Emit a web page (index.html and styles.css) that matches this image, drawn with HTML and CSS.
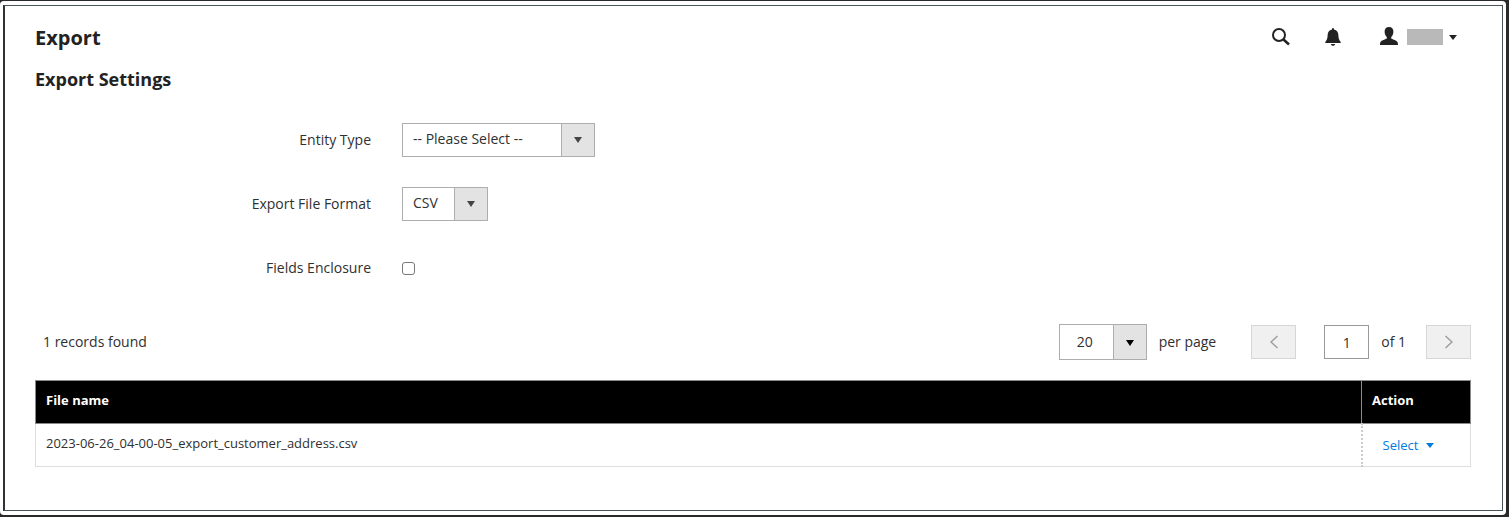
FILE: index.html
```html
<!DOCTYPE html>
<html lang="en">
<head>
<meta charset="utf-8">
<meta name="viewport" content="width=device-width, initial-scale=1">
<title>Export</title>
<link rel="stylesheet" href="styles.css">
</head>
<body>
<div class="frame">
<main class="panel">
  <header class="header">
    <h1 class="title">Export</h1>
    <div class="tools">
      <button class="tool" type="button" aria-label="Search">
        <svg width="20" height="20" viewBox="0 0 20 20"><circle cx="8" cy="8" r="6" fill="none" stroke="currentColor" stroke-width="2"/><path d="M12.5 12.5 18 17.500" stroke="currentColor" stroke-width="2.500"/></svg>
      </button>
      <button class="tool tool-bell" type="button" aria-label="Notifications">
        <svg width="16" height="20" viewBox="0 0 16 20"><path fill="currentColor" d="M7 2.500C7 .5 9 .5 9 2.500c3 .6 4.300 2.800 4.400 6 .1 3 .6 4.300 2.300 6.500v1H.3v-1c1.700-2.200 2.200-3.500 2.300-6.500.1-3.200 1.400-5.400 4.400-6zM5.800 17h4.400c-.5 2.400-3.900 2.400-4.400 0z"/></svg>
      </button>
      <button class="tool user" type="button" aria-label="Account">
        <svg width="18" height="20" viewBox="0 0 18 20"><path fill="currentColor" d="M9 0c2.900 0 4.400 1.900 4.400 4.700 0 2.200-.9 4.300-2.200 5.300v1.500c1.300 1 6.800 1.500 6.800 5.500v1H0v-1c0-4 5.500-4.500 6.800-5.500V10C5.500 9 4.600 6.900 4.600 4.700 4.600 1.900 6.100 0 9 0z"/></svg>
        <span class="user-name"></span>
        <svg class="caret" width="8" height="5" viewBox="0 0 8 5"><path fill="currentColor" d="M0 0h8L4 5z"/></svg>
      </button>
    </div>
  </header>

  <h2 class="section-title">Export Settings</h2>
  <form class="settings">
    <label class="label" for="entity">Entity Type</label>
    <div class="select select-entity">
      <select id="entity"><option>-- Please Select --</option></select>
      <svg class="arrow" width="8" height="6" viewBox="0 0 8 6"><path fill="currentColor" d="M0 0h8L4 6z"/></svg>
    </div>
    <label class="label" for="format">Export File Format</label>
    <div class="select select-format">
      <select id="format"><option>CSV</option></select>
      <svg class="arrow" width="8" height="6" viewBox="0 0 8 6"><path fill="currentColor" d="M0 0h8L4 6z"/></svg>
    </div>
    <label class="label" for="enclosure">Fields Enclosure</label>
    <input class="checkbox" id="enclosure" type="checkbox">
  </form>

  <div class="toolbar">
    <span class="records">1 records found</span>
    <div class="pager">
      <div class="select select-size">
        <select id="size"><option>20</option></select>
        <svg class="arrow" width="8" height="6" viewBox="0 0 8 6"><path fill="currentColor" d="M0 0h8L4 6z"/></svg>
      </div>
      <label class="per-page" for="size">per page</label>
      <button class="page-button" type="button" aria-label="Previous page" disabled><svg width="8" height="14" viewBox="0 0 8 14"><path d="M7.500 1 1 7l6.500 6" fill="none" stroke="currentColor" stroke-width="1.300"/></svg></button>
      <input class="page-input" id="page" type="text" value="1">
      <label class="page-total" for="page">of 1</label>
      <button class="page-button" type="button" aria-label="Next page" disabled><svg width="8" height="14" viewBox="0 0 8 14"><path d="M.5 1 7 7 .5 13" fill="none" stroke="currentColor" stroke-width="1.300"/></svg></button>
    </div>
  </div>

  <table class="files">
    <thead><tr><th>File name</th><th class="action">Action</th></tr></thead>
    <tbody><tr>
      <td>2023-06-26_04-00-05_export_customer_address.csv</td>
      <td class="action"><button class="action-button" type="button">Select <svg width="8" height="5" viewBox="0 0 8 5"><path fill="currentColor" d="M0 0h8L4 5z"/></svg></button></td>
    </tr></tbody>
  </table>
</main>
</div>
</body>
</html>
```
FILE: styles.css
```css
*, *::before, *::after { box-sizing: border-box; }

body {
  display: flex;
  min-height: 100vh;
  margin: 0;
  padding: 1px 3px 2px 0;
  background: #29292b;
  color: #303030;
  font: 14px/20px "Open Sans", sans-serif;
}

button, select, input { color: inherit; font: inherit; }
svg { display: block; flex: none; }

.frame {
  display: flex;
  flex: 1;
  padding: 4px 3px 4px 3px;
  border-radius: 4px;
  background: #fff;
}

.panel {
  flex: 1;
  min-width: 0;
  padding: 18px 31px 40px 30px;
  border: 1px solid #48565a;
  border-left: 2px solid #303234;
}

.header {
  display: flex;
  align-items: center;
  justify-content: space-between;
  height: 28px;
}

.title, .section-title {
  margin: 0;
  color: #222;
  font-size: 20px;
  font-weight: 700;
  line-height: 28px;
}
.section-title { margin-top: 13px; font-size: 18px; }

.tools { display: flex; align-items: center; padding: 0 14px 2px 0; }
.tool {
  display: flex;
  align-items: center;
  padding: 0;
  border: 0;
  background: none;
  color: #222;
}
.tool-bell { margin: 0 39px 0 34px; }
.user-name { width: 36px; height: 16px; margin: 0 6px 0 9px; background: #b9b9b9; }

.settings {
  display: grid;
  grid-template-columns: 336px auto;
  grid-auto-rows: 34px;
  gap: 30px 31px;
  align-items: center;
  justify-content: start;
  margin-top: 30px;
}
.label { text-align: right; }

.select { display: grid; position: relative; width: 86px; height: 34px; }
.select select {
  width: 100%;
  padding: 0 34px 2px 10px;
  border: 1px solid #adadad;
  border-radius: 0;
  background: linear-gradient(#adadad, #adadad) right 32px top / 1px 100% no-repeat,
    linear-gradient(#e3e3e3, #e3e3e3) right / 32px 100% no-repeat #fff;
  appearance: none;
}
.select-entity { width: 193px; }
.arrow { position: absolute; top: 14px; right: 13px; color: #444; pointer-events: none; }

.checkbox {
  width: 13px;
  height: 13px;
  margin: 0;
  border: 1px solid #777;
  border-radius: 3px;
  background: #fff;
  appearance: none;
}
.checkbox:checked { background: #007bdb; }

.toolbar {
  display: flex;
  align-items: center;
  justify-content: space-between;
  margin-top: 39px;
  padding-left: 8px;
}
.pager { display: flex; align-items: center; }
.select-size { width: 88px; height: 36px; }
.select-size select { padding: 0 34px 0 17px; }
.select-size .arrow { top: 16px; color: #000; }
.per-page { margin: 0 35px 0 12px; }
.page-button {
  display: flex;
  align-items: center;
  justify-content: center;
  width: 45px;
  height: 34px;
  padding: 0;
  border: 1px solid #d6d6d6;
  background: #f0f0f0;
  color: #999;
}
.page-input {
  width: 45px;
  height: 34px;
  margin: 0 12px 0 28px;
  padding: 0;
  border: 1px solid #999;
  border-radius: 0;
  text-align: center;
}
.page-total { margin-right: 20px; }

.files { width: 100%; margin-top: 20px; border-collapse: collapse; }
.files th, .files td {
  height: 43px;
  padding: 0 10px 4px;
  border: 1px solid #ddd;
  font-size: 13px;
  text-align: left;
}
.files th { border-color: #8a8a8a; background: #000; color: #fff; font-weight: 700; }
.files .action { width: 109px; }
.files td.action { padding: 0 20px; border-left: 2px dotted #ccc; }
.action-button {
  display: flex;
  align-items: center;
  gap: 8px;
  padding: 0;
  border: 0;
  background: none;
  color: #007bdb;
}
```
